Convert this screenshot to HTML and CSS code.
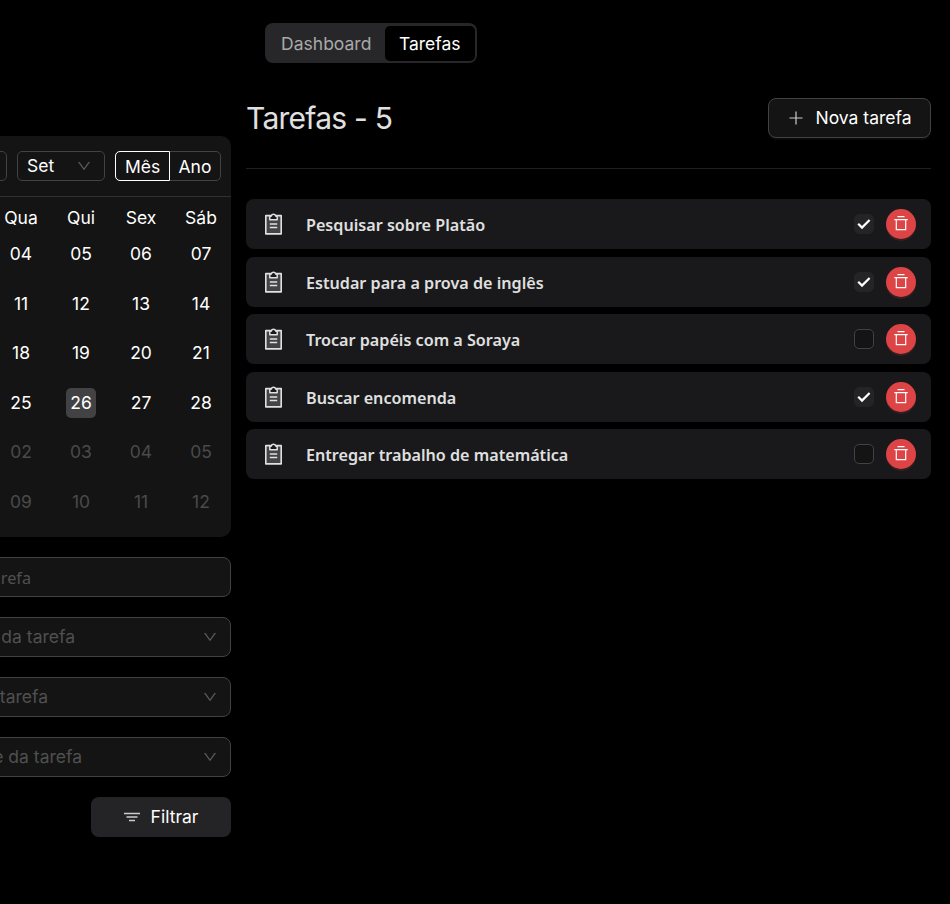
FILE: index.html
```html
<!DOCTYPE html>
<html lang="pt-BR">
<head>
<meta charset="utf-8">
<title>Tarefas</title>
<link rel="stylesheet" href="styles.css">
</head>
<body>
<svg width="0" height="0" class="defs">
  <symbol id="down" viewBox="0 0 1024 1024"><path d="M884 256h-75c-5.1 0-9.9 2.5-12.9 6.6L512 654.2 227.9 262.6c-3-4.1-7.8-6.6-12.9-6.6h-75c-6.5 0-10.3 7.4-6.5 12.7l352.6 486.1c12.8 17.6 39 17.6 51.7 0l352.6-486.1c3.9-5.3.1-12.7-6.4-12.7z"/></symbol>
  <symbol id="clip" viewBox="0 0 20 24"><path d="M2.800 3.600H18.200V21.900H2.800Z" fill="#444446" stroke="#e0e0e0" stroke-width="1.600" stroke-linejoin="round"/><path d="M6.800 7.800V4.600L8.300 4A2.300 2.300 0 0 1 12.700 4L14.200 4.600V7.800Z" fill="#19191b" stroke="#e0e0e0" stroke-width="1.500" stroke-linejoin="round"/><path d="M6.800 12H14.200M6.800 15.500H14.200" stroke="#e0e0e0" stroke-width="1.300"/></symbol>
  <symbol id="trash" viewBox="0 0 14 16"><path d="M3.500 .7H10.500M.3 3.600H13.700M2.300 4V13.600H11.700V4" fill="none" stroke="#fff" stroke-width="1.200"/></symbol>
  <symbol id="check" viewBox="0 0 14 12"><path d="M1.200 5.800L5 9.600L12.600 2" fill="none" stroke="#fff" stroke-width="2.200"/></symbol>
</svg>
<div class="app">
  <nav class="tabs"><span class="tab">Dashboard</span><span class="tab active">Tarefas</span></nav>
  <div class="layout">
    <aside class="sidebar">
      <section class="calendar">
        <header class="cal-head">
          <span class="year"></span>
          <span class="month">Set<svg class="arrow"><use href="#down"/></svg></span>
          <div class="mode"><span class="on">Mês</span><span>Ano</span></div>
        </header>
        <div class="week"><span>Qua</span><span>Qui</span><span>Sex</span><span>Sáb</span></div>
        <div class="days">
          <span>04</span><span>05</span><span>06</span><span>07</span>
          <span>11</span><span>12</span><span>13</span><span>14</span>
          <span>18</span><span>19</span><span>20</span><span>21</span>
          <span>25</span><span><b class="today">26</b></span><span>27</span><span>28</span>
          <span class="off">02</span><span class="off">03</span><span class="off">04</span><span class="off">05</span>
          <span class="off">09</span><span class="off">10</span><span class="off">11</span><span class="off">12</span>
        </div>
      </section>
      <div class="field"><span class="hint name">arefa</span></div>
      <div class="field"><span class="hint type">da tarefa</span><svg class="arrow"><use href="#down"/></svg></div>
      <div class="field"><span class="hint state">tarefa</span><svg class="arrow"><use href="#down"/></svg></div>
      <div class="field"><span class="hint level">e da tarefa</span><svg class="arrow"><use href="#down"/></svg></div>
      <button class="filter"><svg class="filter-icon" viewBox="0 0 16 16"><path d="M0 4.500H16M2.500 8H13.500M5 11.500H11"/></svg>Filtrar</button>
    </aside>
    <main class="main">
      <header class="head"><h1>Tarefas - 5</h1><button class="new"><svg class="plus" viewBox="0 0 14 14"><path d="M7 .5V13.500M.5 7H13.500"/></svg>Nova tarefa</button></header>
      <ul class="list">
        <li><svg class="clip"><use href="#clip"/></svg><span class="title">Pesquisar sobre Platão</span><i class="box done"><svg><use href="#check"/></svg></i><button class="del"><svg><use href="#trash"/></svg></button></li>
        <li><svg class="clip"><use href="#clip"/></svg><span class="title">Estudar para a prova de inglês</span><i class="box done"><svg><use href="#check"/></svg></i><button class="del"><svg><use href="#trash"/></svg></button></li>
        <li><svg class="clip"><use href="#clip"/></svg><span class="title">Trocar papéis com a Soraya</span><i class="box"></i><button class="del"><svg><use href="#trash"/></svg></button></li>
        <li><svg class="clip"><use href="#clip"/></svg><span class="title">Buscar encomenda</span><i class="box done"><svg><use href="#check"/></svg></i><button class="del"><svg><use href="#trash"/></svg></button></li>
        <li><svg class="clip"><use href="#clip"/></svg><span class="title">Entregar trabalho de matemática</span><i class="box"></i><button class="del"><svg><use href="#trash"/></svg></button></li>
      </ul>
    </main>
  </div>
</div>
</body>
</html>
```
FILE: styles.css
```css
* { box-sizing: border-box; }
body { margin: 0; background: #000; color: #fff; font: 17.5px/28px Inter, sans-serif; overflow: hidden; }
button { font: inherit; color: inherit; border: 0; padding: 0; display: flex; align-items: center; }
svg { display: block; flex: none; }
.defs { display: none; }
.app { width: 950px; height: 904px; overflow: hidden; padding-top: 23px; }
.tabs { display: flex; width: 212px; height: 40px; margin-left: 265px; padding: 2.5px; border-radius: 8px; background: #272729; }
.tab { flex: none; width: 117.500px; text-align: center; line-height: 36px; color: #a9a9aa; }
.tab.active { width: 89.500px; height: 35px; background: #000; color: #fff; border-radius: 5px; }
.layout { display: flex; gap: 15px; margin-top: 35px; }
.sidebar { width: 240px; margin-left: -9px; padding-top: 38px; display: flex; flex-direction: column; gap: 20px; }
.calendar { height: 401px; background: #141414; border-radius: 0 10px 10px 0; }
.cal-head { height: 61px; padding: 15px 10px 0 0; display: flex; justify-content: flex-end; gap: 10px; border-bottom: 1px solid #303030; }
.year { flex: none; width: 30px; height: 30px; border: 1px solid #424242; border-radius: 5px; }
.month { flex: none; width: 88px; height: 30px; border: 1px solid #424242; border-radius: 5px; padding: 0 12.500px 0 9px; display: flex; align-items: center; justify-content: space-between; }
.arrow { width: 16px; height: 16px; fill: #5a5a5a; }
.mode { flex: none; display: flex; width: 106px; height: 30px; border: 1px solid #424242; border-radius: 5px; line-height: 30px; }
.mode span { flex: none; width: 50px; text-align: center; }
.mode .on { width: 55px; height: 30px; margin: -1px 0 0 -1px; line-height: 30px; border: 1px solid #fff; border-radius: 5px 0 0 5px; }
.week, .days { display: grid; grid-template-columns: repeat(4, 60px); text-align: center; }
.week { height: 32px; padding-top: 7px; }
.days { grid-auto-rows: 49.600px; line-height: 49.600px; }
.days span { display: flex; justify-content: center; align-items: center; }
.days .off { color: #4a4a4a; }
.today { width: 30px; height: 30px; line-height: 30px; font-weight: 400; background: #424244; border-radius: 5px; }
.field { height: 40px; display: flex; align-items: center; justify-content: space-between; padding-right: 12.500px; border: 1px solid #424242; border-radius: 8px; background: #141414; color: #505050; }
.hint { display: flex; justify-content: flex-end; white-space: nowrap; }
.name { width: 39px; padding-top: 2px; font-family: "Noto Sans", sans-serif; font-size: 16.200px; }
.type { width: 83px; }
.state { width: 56px; }
.level { width: 90px; }
.filter { width: 140px; height: 40px; align-self: flex-end; justify-content: center; gap: 11px; background: #242426; border-radius: 8px; }
.filter-icon { width: 16px; height: 16px; fill: none; stroke: #ccc; stroke-width: 1.300; }
.main { width: 685px; }
.head { height: 71px; display: flex; align-items: flex-start; justify-content: space-between; border-bottom: 1px solid #202020; }
h1 { margin: 0; font-size: 30px; line-height: 41px; font-weight: 400; letter-spacing: -.75px; color: #e0e0e0; }
.new { width: 163px; height: 40px; padding-left: 2px; justify-content: center; gap: 12px; border: 1px solid #424242; border-radius: 8px; background: #141414; box-shadow: 0 2px 0 #0a0a0a; }
.plus { width: 14px; height: 14px; stroke: #ccc; stroke-width: 1.200; }
.list { list-style: none; margin: 30px 0 0; padding: 0; display: grid; gap: 7.500px; }
.list li { height: 50px; padding: 0 15px 0 17px; display: flex; align-items: center; border-radius: 8px; background: #19191b; }
.clip { width: 20px; height: 24px; }
.title { margin-left: 23px; padding-top: 2px; flex: 1; font: 600 16.150px/28px "Noto Sans", sans-serif; color: #e0e0e0; }
.box { width: 20px; height: 20px; margin-right: 12px; border: 1px solid #424242; border-radius: 5px; background: #141414; display: grid; place-items: center; }
.box.done { background: #242426; border-color: #242426; }
.box svg { width: 14px; height: 12px; }
.del { width: 30px; height: 30px; justify-content: center; border-radius: 50%; background: #dc4446; box-shadow: 0 2px 0 rgba(220,68,70,.15); }
.del svg { width: 14px; height: 16px; }
```
